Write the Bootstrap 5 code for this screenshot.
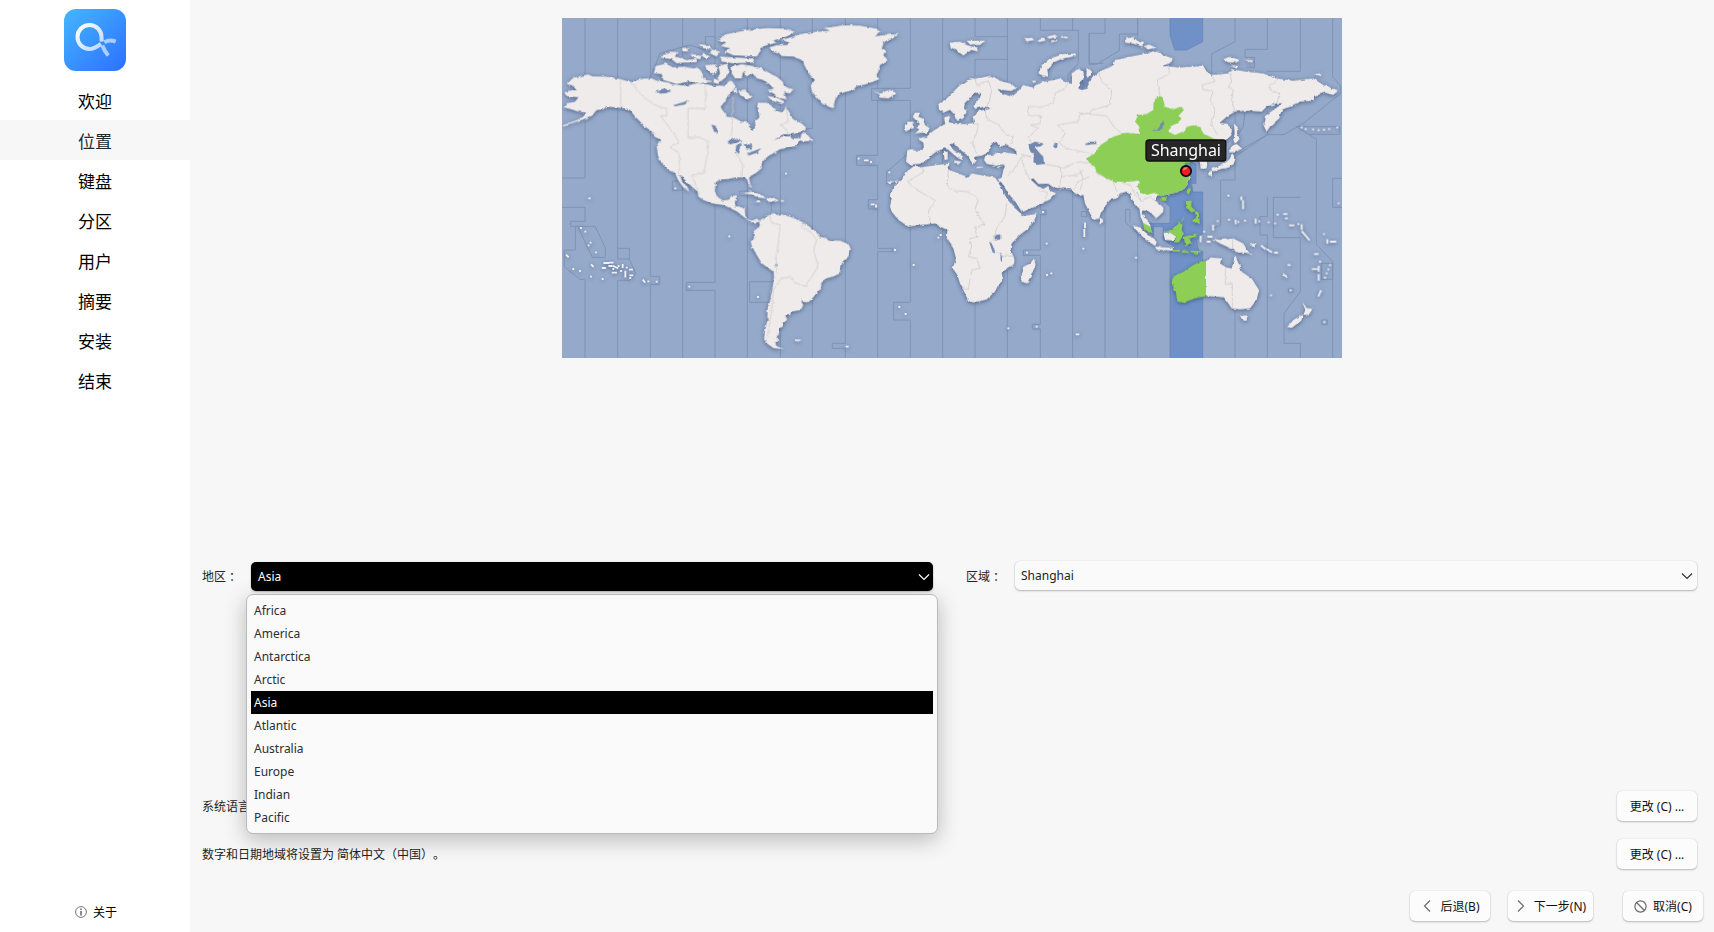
<!DOCTYPE html>
<html lang="zh-CN">
<head>
<meta charset="utf-8">
<meta name="viewport" content="width=device-width, initial-scale=1">
<title>安装程序</title>
<link rel="stylesheet" href="https://cdn.jsdelivr.net/npm/bootstrap@5.3.0/dist/css/bootstrap.min.css">
<style>
body{font-family:"Noto Sans","Noto Sans CJK SC",sans-serif;font-size:12px;line-height:18px;color:#232323;background:#f7f7f7;height:100vh;overflow:hidden;text-spacing-trim:space-all}
.side{width:190px;background:#fff;color:#000}
.side .logo{margin:9px auto 9px;width:62px;height:62px}
.step{height:40px;font-size:17px;line-height:43px;color:#000}
.step.active{background:#f7f7f7;color:#232a30}
.about{height:40px;padding-left:75px;gap:6px;color:#000}
.about span{padding-top:2px}
.page{padding:18px 11px 11px 12px}
.world{width:780px;height:340px;margin-left:-1px}
.zone-row{padding-right:6px;gap:33px;height:30px}
.lbl{width:49px;padding-top:2px}
.colon{font-family:"Noto Sans CJK TC",sans-serif}
.combo{height:29px;border-radius:5px;background:#fafafa;box-shadow:0 0 1px rgba(0,0,0,.2),0 1px 2px rgba(0,0,0,.25);padding:0 4px 0 6px;line-height:28px}
.combo.open{background:#000;color:#fff;margin-top:1px;padding:0 3px 0 7px;line-height:30px}
.drop{top:33px;left:44px;width:692px;height:240px;padding:4px;border:1px solid #b9b9b9;border-radius:7px;background:#fafafa;box-shadow:0 6px 22px rgba(0,0,0,.25);z-index:5}
.opt{height:23px;line-height:23px;padding-left:3px;color:#2b2f33}
.opt.on{background:#000;color:#fff}
.tool{height:30px;width:80px;border:0;border-radius:5px;background:#fcfcfc;box-shadow:0 0 1px rgba(0,0,0,.2),0 1px 2px rgba(0,0,0,.24);font-size:12px;line-height:18px;padding:2px 0 0;color:#111}
.locale{height:30px;padding-right:6px}
.locale span{padding-top:2px;font-kerning:none;font-feature-settings:"chws" 0,"kern" 0}
.ic{fill:none;stroke:#6b6b6b;stroke-width:1.2;margin-bottom:2px}
</style>
</head>
<body class="d-flex">
<aside class="side d-flex flex-column flex-shrink-0 h-100 text-center">
  <svg class="logo" viewBox="0 0 62 62">
    <defs>
      <linearGradient id="lg" x1="0" y1="0" x2="1" y2="1"><stop offset="0" stop-color="#45b6ff"/><stop offset="1" stop-color="#2c70ff"/></linearGradient>
      <linearGradient id="lw" x1="0" y1="0" x2="1" y2="1"><stop offset="0" stop-color="#fff"/><stop offset="1" stop-color="#bcd7ff"/></linearGradient>
    </defs>
    <rect width="62" height="62" rx="12" fill="url(#lg)"/>
    <g fill="none" stroke-width="4">
      <path d="M38.300 36.500C39.800 40.500 41.700 43.700 44.300 46.500" stroke="#abceff"/>
      <path d="M40.300 33.300C44 31.200 47.500 31 51.700 32.700" stroke="#abceff"/>
      <path d="M37 34.800C33 37.800 29.500 40 25.500 40A12 12 0 1 1 37.500 28Q37.500 30.500 37.800 32.500" stroke="url(#lw)"/>
    </g>
  </svg>
  <div class="step">欢迎</div>
  <div class="step active">位置</div>
  <div class="step">键盘</div>
  <div class="step">分区</div>
  <div class="step">用户</div>
  <div class="step">摘要</div>
  <div class="step">安装</div>
  <div class="step">结束</div>
  <div class="about mt-auto d-flex align-items-center">
    <svg width="12" height="12" viewBox="0 0 12 12"><circle cx="6" cy="6" r="5.4" fill="none" stroke="#777"/><path d="M6 5v4.5M6 2.5V4" stroke="#666" stroke-width="1.5"/></svg>
    <span>关于</span>
  </div>
</aside>

<main class="page flex-grow-1 d-flex flex-column">
  <svg class="world align-self-center flex-shrink-0" viewBox="0 0 2340 1020">
    <defs>
      <filter id="coast" x="0" y="0" width="2340" height="1020" filterUnits="userSpaceOnUse" color-interpolation-filters="sRGB">
        <feTurbulence type="fractalNoise" baseFrequency=".07" numOctaves="2" seed="4" result="n"/>
        <feDisplacementMap in="SourceGraphic" in2="n" scale="9" xChannelSelector="R" yChannelSelector="G"/>
      </filter>
      <filter id="shade" x="0" y="0" width="2340" height="1020" filterUnits="userSpaceOnUse" color-interpolation-filters="sRGB">
        <feDropShadow dx="0" dy="3" stdDeviation="6" flood-color="#2f456e" flood-opacity=".75"/>
      </filter>
    </defs>
    <rect width="2340" height="1020" fill="#95a9ca"/>
    <!-- highlighted zone -->
    <g transform="translate(1554 -24)" fill="#6f91c7" stroke="#6580b1" stroke-width="2">
      <path d="M270 20H368V95L320 120H284L270 75Z"/>
      <path d="M330 455L348 462V520H335L338 546H368V670L350 690 355 720 368 725V1050H270V725L285 712 250 690V650H220V680L190 640H270V592L240 560 300 545 330 510Z"/>
    </g>
    <!-- zone boundaries at sea -->
    <g fill="none" stroke="#8092b4" stroke-width="3">
      <g transform="translate(-6 -24)">
        <path d="M75 20V504H0M0 592H75V634H32V649H105L136 712V742H97L53 649M46 649V720H13V770L60 808H75V1050M173 20V715H208V747M173 811V1050M173 747V715M173 811H210L227 790 208 747H173M271 20V799H299V823H271V1050M368 20V1050M465 20V817H379V841H465V1050M562 20V1050M661 20V1050M757 20V356M757 400V1050M271 205L300 130 390 105 436 120V80H465M337 513H368V541H337ZM569 815H640V877H569ZM539 543H562V557H539ZM634 575V605M690 356H757"/>
      </g>
      <g transform="translate(774 -24)">
        <path d="M76 20V1000H37V1015H76V1050M173 20V235M173 271V436H110V466H173V569H145V597H173V715H218V725H173V1050M271 20V235H155V271H271V425L200 486V520H225M271 650V877H221V930H271V1050M368 20V470M368 650V1050M465 20V80H562M465 200V148H562M465 870V1050M562 20V230M562 780V1050M661 20V61H775V160L743 195V210M661 570V600H678V614H661V720H610V736H661V943H637V957H661V1050M758 20V61M758 540V1050M784 605H800V620H784ZM808 70V160H850"/>
      </g>
      <g transform="translate(1554 -24)">
        <path d="M75 20V70H27V163H50L118 122V72H173V20M75 590V1050M173 20V80M150 638V598H137V638L173 670V1050M465 20V95L395 132V190M562 20V118H495V142H523V172H500M661 20V184H560M758 20V200L782 228V250L670 340 612 374H562L465 440V510H422V646L400 655M465 300V440M495 300L490 350 465 385M562 300V374L480 420M650 350L709 388V703L758 755V1050M650 350H778V373H685M580 562H661M580 562V683H661V845L612 910V1000H661V1050M562 560V620H540V675H562V1050M465 900V1050M790 505H758V592H790M725 760H758V808H725ZM625 835H640V847H625ZM725 930H742V943H725Z"/>
      </g>
    </g>
    <g filter="url(#shade)">
      <g filter="url(#coast)" fill="#efebeb">
        <g transform="translate(-6 -24)">
          <!-- North America -->
          <path d="M20 222L40 203 62 198 84 193 98 199 140 200 182 207 212 216 225 212 250 206 275 205 290 212 325 217 335 222 378 227 410 220 440 222 462 228 480 226 495 228 505 215 515 212 528 230 520 240 500 262 495 275 482 290 488 302 498 310 500 320 520 322 545 335 565 338 568 352 580 360 586 350 585 335 598 322 595 300 592 282 597 278 620 278 632 285 650 300 668 308 678 290 690 310 700 328 725 340 738 352 735 362 700 372 670 373 650 385 640 392 665 380 690 378 700 385 720 385 725 370 738 368 757 392 730 395 718 390 708 408 690 412 660 418 640 430 625 438 612 450 605 460 605 475 590 488 572 498 567 505 572 525 577 533 568 530 562 510 555 503 530 502 505 507 480 508 467 518 465 545 475 562 490 572 508 568 512 558 530 556 530 570 525 588 540 590 555 597 555 615 563 628 575 632 590 626 600 632 590 638 572 636 550 620 530 604 505 592 490 585 455 580 430 570 415 560 412 545 395 530 375 510 358 494 365 510 380 530 388 546 370 532 355 512 345 490 325 480 310 465 300 450 294 438 290 410 293 400 303 392 300 380 290 375 275 365 255 350 240 335 225 320 210 300 195 295 165 292 140 290 130 298 110 300 95 318 70 328 40 338 10 350 8 346 50 330 70 320 78 308 55 305 40 300 22 295 14 292 20 280 45 275 55 262 20 258 12 248 30 242 50 240 35 225Z"/>
          <!-- South America -->
          <path d="M597 632L615 622 632 612 640 610 650 615 660 612 690 620 715 630 735 640 755 655 768 665 778 680 800 685 805 692 840 692 865 702 873 715 865 740 848 755 842 775 840 790 820 800 800 805 785 815 783 835 770 850 757 865 740 878 730 875 722 868 730 885 722 900 695 905 690 915 675 917 682 930 668 938 668 950 658 955 660 970 650 980 655 995 645 998 650 1008 672 1018 640 1014 620 1000 612 985 615 960 622 930 622 900 630 870 638 830 642 800 640 785 625 775 605 760 590 735 575 708 572 695 582 685 580 670 590 655 600 650 598 640Z"/>
          <!-- Greenland -->
          <path d="M628 112L650 105 680 105 690 98 662 90 700 80 720 72 760 66 810 62 790 54 850 46 900 47 950 56 962 66 945 78 990 74 1018 72 1000 82 975 95 965 112 980 125 970 136 984 150 960 165 958 178 950 195 958 208 920 222 890 228 880 240 850 248 835 255 825 270 820 295 800 288 785 280 770 262 755 245 752 225 765 210 745 190 735 170 725 150 700 140 665 138 655 128 635 122Z"/>
          <!-- Canadian archipelago -->
          <path d="M472 90L500 72 560 60 620 54 680 56 705 66 680 80 640 92 650 98 610 108 600 125 590 140 560 138 520 136 495 125 510 115 482 108 500 98Z"/>
          <path d="M286 168L320 160 338 172 372 170 400 175 415 172 428 190 430 205 455 215 420 220 385 215 350 222 310 210 305 192 282 190Z"/>
          <path d="M300 142L330 125 352 126 345 140 380 150 410 146 412 156 370 158 350 160 335 148ZM365 114L388 112 385 124 368 124ZM415 102L450 106 455 118 430 115ZM390 130L425 138 420 148 395 140ZM435 165L465 163 472 180 460 195 440 180ZM475 170L500 160 508 185 500 200 482 215 472 205 480 190ZM480 140L520 142 582 145 580 158 520 160 485 155ZM455 118L480 125 470 140 450 130ZM430 128L450 140 440 148 425 140ZM462 205L480 212 475 222 460 218Z"/>
          <path d="M515 170L545 162 580 168 605 175 630 190 650 200 668 215 672 228 700 238 690 250 672 248 680 268 660 265 640 250 622 240 642 235 620 220 610 210 590 205 580 190 560 200 550 185 545 205 525 205 515 190ZM535 242L555 238 575 262 562 268 540 255ZM520 240L530 235 532 250 522 248ZM622 258L650 262 675 275 665 282 635 272Z"/>
          <!-- Caribbean -->
          <path d="M550 550L575 544 600 553 620 566 595 563 575 554ZM620 564L640 563 657 572 640 577 620 574ZM590 571h13v6h-13ZM662 570h10v5h-10ZM272 366L300 378 306 390 285 381ZM705 988h18v5h-18Z"/>
        </g>
        <g transform="translate(774 -24)">
          <!-- Eurasia -->
          <path d="M262 420L300 422 312 418 310 398 292 385 320 380 340 362 360 350 376 342 372 325 382 316 390 320 386 335 400 342 440 342 462 338 458 320 470 310 478 302 512 296 495 290 465 296 460 288 480 262 484 250 465 248 450 265 435 278 432 295 440 305 430 325 412 333 400 310 390 300 370 308 357 300 355 282 380 265 400 245 420 225 450 208 480 203 510 198 540 212 575 222 590 235 570 243 545 240 530 237 550 252 575 260 590 248 610 225 640 232 660 218 700 210 720 205 740 215 756 222 755 190 775 175 795 190 795 205 780 215 775 235 785 240 803 235 798 195 800 172 812 180 815 205 830 192 845 182 880 165 885 150 930 140 980 130 1005 122 1030 135 1058 145 1055 155 1030 168 1080 172 1150 168 1160 185 1175 195 1225 190 1240 178 1280 185 1330 190 1370 205 1420 212 1480 205 1510 225 1555 242 1540 255 1515 248 1485 258 1480 272 1440 275 1420 285 1385 300 1378 325 1350 350 1340 365 1330 345 1335 318 1360 300 1388 280 1370 280 1340 290 1325 305 1280 302 1245 305 1220 320 1200 338 1220 342 1235 355 1235 375 1220 390 1205 410 1175 425 1155 440 1162 460 1160 475 1142 476 1140 458 1130 440 1110 450 1090 465 1112 500 1100 530 1080 545 1050 552 1025 558 1010 560 1005 570 1030 592 1030 605 1015 620 1005 626 995 610 980 600 968 598 965 610 975 625 990 640 995 668 980 658 970 640 962 620 958 595 945 585 930 555 920 545 900 550 890 565 870 570 850 595 842 610 838 625 822 630 810 610 795 580 790 555 780 558 765 550 755 538 730 535 700 532 685 522 655 522 640 505 632 508 655 530 670 537 685 528 690 540 708 550 690 568 660 585 605 606 590 580 565 550 545 518 532 508 545 503 550 480 555 468 545 463 530 468 500 462 492 450 496 437 530 432 560 428 590 432 588 420 555 405 540 412 530 396 515 400 508 415 500 430 485 437 465 440 470 452 460 464 450 450 440 435 420 418 405 402 388 402 400 420 430 440 428 450 415 445 385 420 370 415 345 428 330 440 315 455 298 462 270 464 258 455Z"/>
          <!-- Africa -->
          <path d="M282 468L300 472 350 465 388 460 385 478 420 492 445 502 455 490 490 496 525 502 532 512 545 535 560 565 580 590 600 608 605 618 650 612 645 630 625 655 600 675 575 700 572 720 583 745 583 762 560 775 545 790 550 810 535 825 525 845 500 868 475 875 445 873 435 850 420 820 412 795 398 775 408 745 400 715 380 685 382 660 360 650 345 640 305 645 265 650 235 630 215 605 210 590 215 565 210 552 225 525 245 510 260 485Z"/>
          <path d="M642 745L647 765 632 800 620 820 605 815 602 795 610 770 630 760ZM162 242L180 250 210 240 230 250 205 265 175 262 180 255ZM285 308L300 308 295 320 308 325 315 345 330 355 318 368 285 370 298 358 288 352 300 342 285 328 278 320ZM260 335L280 335 282 354 256 364 254 348ZM389 98L420 95 440 105 470 112 475 125 455 120 430 136 405 118 392 112ZM440 92L495 92 490 101 450 104ZM655 190L665 165 690 145 730 132 767 130 767 138 725 147 700 158 682 178 685 200 668 197ZM372 425h11v10h-11ZM373 434h10v14h-10ZM402 451L424 454 418 461 402 458ZM470 470h18v4h-18ZM530 472L546 466 540 474ZM200 511L220 514 210 521ZM222 514L234 510 230 519ZM635 212h12v5h-12Z"/>
          <path d="M612 88l22-6 10 8-22 4zM650 90l22-6 5 8-20 4zM680 80l25-6 8 6-25 6zM690 92l20-4 2 5-18 4zM722 78l20 2 2 5-20-2z"/>
        </g>
        <g transform="translate(1554 -24)">
          <!-- Oceania and the Pacific rim -->
          <path d="M378 758L392 742 425 745 420 760 440 772 455 775 465 738 478 765 485 785 515 805 537 840 530 870 510 895 480 898 455 895 445 880 432 862 410 860 370 858 370 760ZM480 916L504 916 498 931 488 933ZM667 876L680 894 698 897 684 918 670 914 676 900ZM670 912L664 932 635 954 621 951 640 930ZM395 685L420 690 460 685 490 700 505 725 518 732 495 728 475 728 460 720 440 710 420 700ZM505 705L530 697 522 711ZM158 645L180 653 212 680 230 695 226 708 200 692 175 667ZM225 710L280 714 283 722 230 719ZM250 668L272 668 290 680 280 692 255 690ZM60 622L70 630 68 642 58 642ZM138 85L160 81 172 92 192 96 187 109 162 102 135 98ZM190 108L210 104 226 112 205 119ZM430 147L450 141 482 149 470 157 440 157ZM491 148L520 151 515 157ZM450 165L475 168 470 175ZM702 192L725 190 722 198ZM462 342L473 350 471 370 479 387 465 402 460 390 464 370ZM453 408L470 402 487 415 466 427 447 427ZM457 430L467 445 461 462 442 473 418 479 400 484 393 478 425 464 440 456 450 445ZM384 485L396 482 396 496 386 496ZM609 789L625 800 620 804 607 795Z"/>
          <!-- selected zone land -->
          <g fill="#8cce56">
            <path d="M18 445L45 430 62 405 100 380 140 368 180 372 178 350 165 335 175 315 200 312 220 300 220 280 235 258 248 262 255 290 280 298 300 290 312 300 295 318 305 325 290 340 270 350 265 365 285 375 315 362 320 350 345 345 362 352 370 370 400 385 412 390 410 402 380 425 345 450 312 465 330 500 322 525 300 545 265 552 240 558 225 548 200 555 185 550 172 530 178 512 150 515 100 515 70 500 50 490 45 470 25 460Z"/>
            <path d="M378 755V858L345 865 310 878 292 875 288 850 275 820 278 800 310 785 340 765 365 753ZM189 639L210 649 218 669 205 666 192 656ZM252 665L275 658 295 638 308 643 305 660 312 672 297 697 282 697 290 680 270 668ZM311 680L335 674 351 670 346 681 326 686 339 702 328 700 317 710ZM318 572L335 571 334 590 347 602 335 607 318 593ZM343 600L356 608 360 642 336 634 349 622ZM316 619L305 637 301 634ZM325 533L333 537 326 554 319 546ZM244 561L262 559 256 574 245 571ZM280 719h20v5h-20ZM305 723h22v5h-22ZM332 722h30v5h-30ZM340 731l12-5v5z"/>
          </g>
        </g>
        <!-- lakes -->
        <g fill="#7288b0">
          <path transform="translate(-6 -24)" d="M288 242L310 236 334 240 320 249 300 251ZM340 285L388 271 375 283 345 289ZM454 344L466 347 473 366 463 366ZM502 394L525 384 548 394 530 398 510 403ZM529 405L546 401 537 431 525 429ZM550 401L576 404 576 419 560 419ZM557 431L580 423 604 414 590 429 565 436ZM645 762h8v6h-8Z"/>
          <path transform="translate(774 -24)" d="M625 405L645 395 668 400 665 408 645 412 660 430 670 440 672 462 650 465 640 455 642 435 630 420ZM524 675L541 673 541 688 524 691ZM507 694L514 698 526 726 518 727ZM541 727L548 737 549 756 542 751ZM699 404L713 400 711 415 703 413ZM796 400h12v5h-12Z"/>
          <path transform="translate(1554 -24)" d="M10 180L20 185 18 205 45 188 30 215 18 235 8 238 12 215ZM214 363L235 355 250 331 253 346 240 361ZM18 402L30 395 52 395 52 402 30 403Z"/>
        </g>
        <!-- boundaries on land -->
        <g fill="none" stroke="#cfcccc" stroke-width="2.5">
          <path transform="translate(-6 -24)" d="M182 207V295M212 216L235 245 270 275 300 292 320 295V318H303L325 350 352 385 355 400 330 412 358 430V494M437 222V295H384V382H420L446 395 440 445 430 490 395 495 405 520 418 555M519 262L515 380M530 430L548 465 545 503M678 290L685 335 660 345 680 358 685 375M628 612L635 638 660 645 655 700 648 740 650 790M735 640L722 650 755 668 770 690 762 720 773 770 755 800 735 830 700 815 690 800 660 808 640 840 635 900 622 980"/>
          <path transform="translate(774 -24)" d="M305 472L312 485 262 515 300 545 347 572 325 600 332 640M385 478L382 530 400 542 445 545 475 568 465 600 495 645 465 650 470 682 450 685 455 710 445 740 470 745 480 775 455 780 445 838 428 835M560 580L555 620 530 655 520 690 512 700M530 725L550 738 580 738M465 205L470 225 505 212 515 240 508 275 495 300 500 325 535 345 560 375 580 378 572 400M462 338L475 345 470 370 455 400 470 430M600 432L635 440 605 440 580 480 560 500M605 445L615 480 630 510M745 215L735 235 705 250 700 280 670 290 625 290V315L665 320 660 340 635 345 655 355 625 380 635 400M808 310L780 312 775 335 712 345 735 370 718 400 740 415 808 430M670 462L720 470 725 500 715 530M718 475L780 455 808 460M725 500L770 495 790 480M760 538L775 515 808 500M658 540L685 548 675 565"/>
          <path transform="translate(1554 -24)" d="M55 185L65 215 95 240 90 285 35 300 28 312 80 318 105 355 125 370M262 165L270 190 232 210 240 258M395 195L405 215 365 225 370 238 400 245 390 270 405 300 395 345 410 370M450 190L455 215 445 230 460 240 455 270 465 305M595 205L580 220 568 225 575 245 600 250 590 280M0 310H28M45 485L100 515 112 545M120 518L150 525 170 560M172 545L180 575 210 560 235 580M436 770V822H457V895M458 685V722M0 480L10 510 0 540"/>
        </g>
      </g>
      <!-- small islands -->
      <g fill="none" stroke="#f1f0f2" stroke-width="5.500" stroke-linecap="square">
        <path transform="translate(-6 -24)" d="M88 565h1M63 654h0M76 665h0M92 698h0M86 706h0M108 727h0M20 736l4 4M40 777h0M60 783h0M95 765l4 4M93 800h0M128 774h7M128 807h0M133 759h12M150 758h8M148 768h6M160 768l12 6M160 777h0M158 788h10M176 768h0M188 765v6M196 785v15M183 783h0M200 773h0M210 779h6M211 796h6M211 804h0M250 811l4 5M265 814h0M290 815h0M388 830h0M346 535h0M508 679h0M594 861h0M678 491h0"/>
        <path transform="translate(774 -24)" d="M116 446h0M135 451h8M153 456h0M208 487h0M155 583h6M168 586v4M225 720h0M281 765h0M238 891h0M257 912h0M355 683h0M362 675h0M565 955h0M650 950h0M680 701h0M621 728h0M681 795h0M694 790h0M669 606h0M770 973h5M795 640v12M793 660v18M790 716h0M80 1010h3"/>
        <path transform="translate(1554 -24)" d="M665 352h0M677 357h0M699 358h0M716 360h0M732 359h0M747 357h0M772 352h0M445 557h0M484 562v6M489 573v22M447 629h0M467 632v8M475 636h0M495 632h0M527 628v10M538 634h0M566 637h0M593 614h0M612 612h8M617 625h4M585 640h0M630 646h10M655 642h0M665 645v12M667 665l20 24M413 633h0M399 647v12M732 672h0M742 690v8M752 695h14M705 732h8M720 755h0M698 777h12M716 770v12M750 765h0M745 778h0M735 803h0M740 790h0M716 795v14M722 843l-6 14M776 580h0M573 856h0M632 841h0M733 936h0M168 743h0M362 680v14M372 665h0M385 680h10M383 695h6M545 708l10 8M562 718l12 8M585 728h6M625 765h4"/>
      </g>
    </g>
    <!-- selected city -->
    <g transform="translate(1554 -24)">
      <rect x="198" y="390" width="240" height="63" rx="9" fill="#262626" stroke="#101010" stroke-width="4"/>
      <text x="318" y="437" text-anchor="middle" textLength="210" font-size="48" fill="#fff">Shanghai</text>
      <circle cx="318" cy="483" r="15.500" fill="#ee1c24" stroke="#000" stroke-width="5"/>
      <path d="M308 479Q313 470 323 472Q318 482 308 479Z" fill="#f57a72"/>
    </g>
  </svg>

  <div class="zone-row d-flex mt-auto position-relative">
    <div class="d-flex flex-fill w-50">
      <div class="lbl flex-shrink-0 d-flex align-items-center">地区<span class="colon" lang="zh-TW">：</span></div>
      <div class="combo open flex-grow-1 d-flex justify-content-between align-items-center"><span>Asia</span><svg width="12" height="8" viewBox="0 0 12 8"><path d="M1 1.500L6 6.500 11 1.500" fill="none" stroke="#fff" stroke-width="1.200"/></svg></div>
    </div>
    <div class="d-flex flex-fill w-50">
      <div class="lbl flex-shrink-0 d-flex align-items-center">区域<span class="colon" lang="zh-TW">：</span></div>
      <div class="combo flex-grow-1 d-flex justify-content-between align-items-center"><span>Shanghai</span><svg width="12" height="8" viewBox="0 0 12 8"><path d="M1 1.500L6 6.500 11 1.500" fill="none" stroke="#333" stroke-width="1.200"/></svg></div>
    </div>
    <div class="drop position-absolute">
      <div class="opt">Africa</div><div class="opt">America</div><div class="opt">Antarctica</div><div class="opt">Arctic</div><div class="opt on">Asia</div><div class="opt">Atlantic</div><div class="opt">Australia</div><div class="opt">Europe</div><div class="opt">Indian</div><div class="opt">Pacific</div>
    </div>
  </div>

  <div class="locale d-flex align-items-center justify-content-between" style="margin-top:200px"><span>系统语言</span><button class="tool">更改 (C) ...</button></div>
  <div class="locale d-flex align-items-center justify-content-between" style="margin-top:18px"><span>数字和日期地域将设置为 简体中文（中国）。</span><button class="tool">更改 (C) ...</button></div>
  <div class="d-flex justify-content-end" style="margin-top:22px">
    <button class="tool d-flex align-items-center justify-content-center" style="gap:9px;margin-right:18px;padding-left:3px"><svg class="ic" width="8" height="12" viewBox="0 0 8 12"><path d="M7 .5L1.500 6 7 11.500"/></svg>后退(B)</button>
    <button class="tool d-flex align-items-center justify-content-center" style="width:85px;gap:9px;margin-right:30px;padding-left:2px"><svg class="ic" width="8" height="12" viewBox="0 0 8 12"><path d="M1 .5L6.500 6 1 11.500"/></svg>下一步(N)</button>
    <button class="tool d-flex align-items-center justify-content-center" style="gap:6px"><svg class="ic" width="13" height="13" viewBox="0 0 13 13"><circle cx="6.500" cy="6.500" r="5.600"/><path d="M2.500 2.500L10.500 10.500"/></svg>取消(C)</button>
  </div>
</main>
<script src="https://cdn.jsdelivr.net/npm/bootstrap@5.3.0/dist/js/bootstrap.bundle.min.js"></script>
</body>
</html>
